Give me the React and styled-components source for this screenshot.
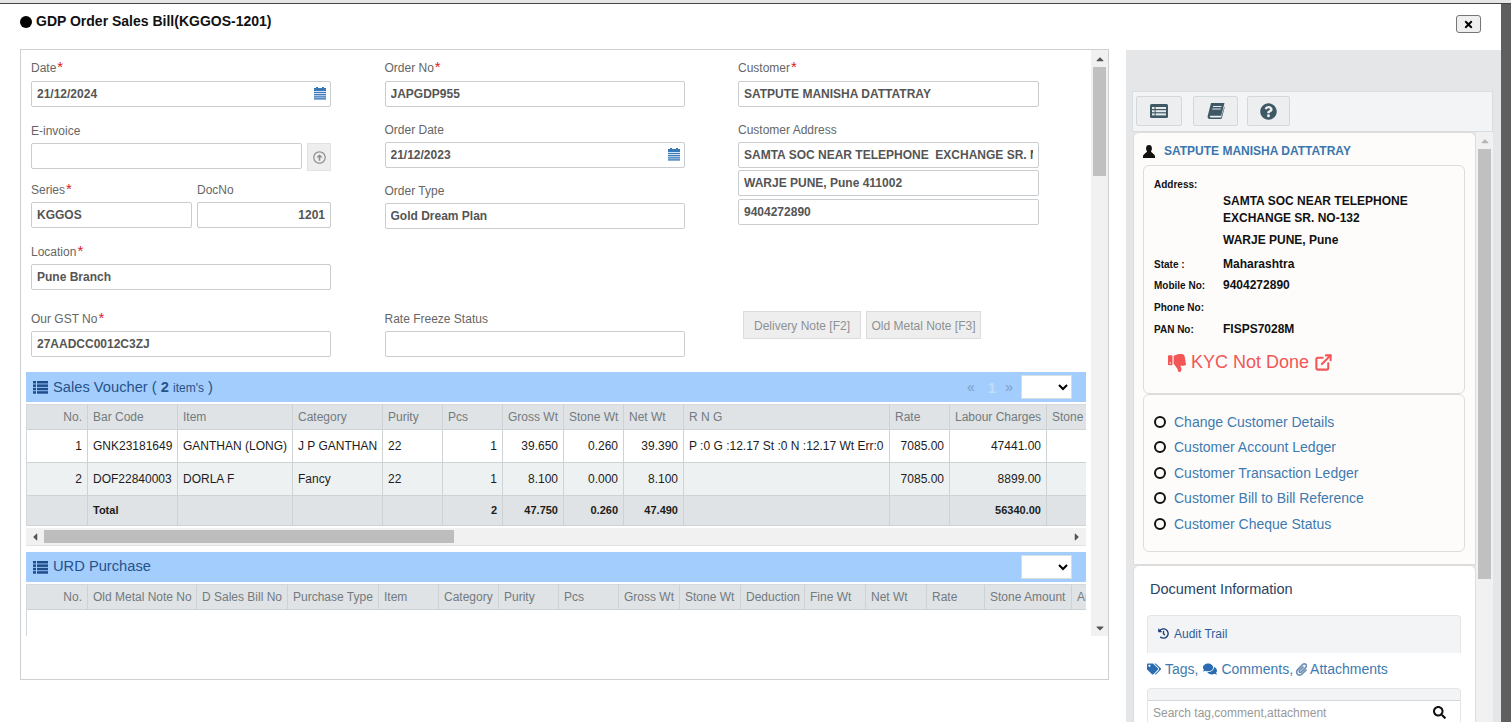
import React from 'react';
import styled, { createGlobalStyle } from 'styled-components';
import {
  FaRegArrowAltCircleUp, FaTimes, FaQuestionCircle, FaThumbsDown, FaTags, FaComments, FaPaperclip,
  FaHistory, FaSearch, FaCaretUp, FaCaretDown, FaCaretLeft, FaCaretRight,
} from 'react-icons/fa';
import { FiExternalLink } from 'react-icons/fi';

const GlobalStyle = createGlobalStyle`
  html, body { margin: 0; padding: 0; height: 100%; overflow: hidden; }
  body { font-family: "Liberation Sans", Arial, sans-serif; font-size: 12px; background: #5f5f5f; }
  * { box-sizing: border-box; }
`;

const Page = styled.div`
  height: 722px;
  display: flex;
  flex-direction: column;
  overflow: hidden;
`;
const TopStrip = styled.div`
  height: 4px;
  flex: none;
  background: #e6e6e6;
  border-bottom: 1px solid #444;
`;
const Modal = styled.div`
  width: 1501px;
  flex: 1;
  min-height: 0;
  background: #fff;
  display: flex;
  flex-direction: column;
`;
const ModalHeader = styled.div`
  height: 45px;
  flex: none;
  display: flex;
  justify-content: space-between;
  padding: 11px 20px 0 20px;
`;
const ModalTitle = styled.div`
  display: flex;
  align-items: flex-start;
  gap: 4px;
  font-size: 14px;
  font-weight: bold;
  line-height: 13px;
  color: #111;
`;
const Bullet = styled.span`
  width: 12px;
  height: 12px;
  border-radius: 50%;
  background: #000;
  margin-top: 1px;
`;
const CloseButton = styled.button`
  width: 25px;
  height: 18px;
  padding: 0;
  display: flex;
  align-items: center;
  justify-content: center;
  background: #efefef;
  border: 1px solid #767676;
  border-radius: 3px;
  font-size: 11px;
  color: #000;
`;
const ModalBody = styled.div`
  flex: 1;
  min-height: 0;
  display: flex;
  padding-left: 20px;
  gap: 17px;
`;

const LeftPanel = styled.div`
  width: 1089px;
  height: 631px;
  flex: none;
  border: 1px solid #ccd0d2;
`;
const LeftInner = styled.div`
  height: 586px;
  display: flex;
`;
const LeftScroll = styled.div`
  width: 1070px;
  flex: none;
  overflow: hidden;
`;
const VBar = styled.div`
  width: ${(p) => p.$w}px;
  flex: none;
  display: flex;
  flex-direction: column;
  align-items: center;
  background: #f1f1f1;
  color: ${(p) => p.$arrow || '#555'};
  font-size: 12px;
`;
const VArrow = styled.div`
  height: 17px;
  flex: none;
  display: flex;
  align-items: center;
  justify-content: center;
`;
const VThumb = styled.div`
  width: 13px;
  height: ${(p) => p.$h}px;
  flex: none;
  background: #c0c0c0;
`;
const VSpace = styled.div`
  flex: 1;
`;

const Form = styled.div`
  display: grid;
  grid-template-columns: 300px 300px 301px;
  column-gap: 53.5px;
  padding: 9px 0 0 10px;
`;
const Column = styled.div`
  display: flex;
  flex-direction: column;
`;
const Field = styled.div`
  margin-top: ${(p) => p.$mt || 0}px;
  width: ${(p) => (p.$w ? `${p.$w}px` : 'auto')};
`;
const Label = styled.div`
  height: 17px;
  line-height: 21px;
  margin-bottom: 5px;
  color: #666;
  font-size: 12px;
`;
const FirstLabel = styled(Label)`
  line-height: 19px;
`;
const Star = styled.span`
  color: #d9202a;
  font-size: 15px;
  line-height: 12px;
  margin-left: 1px;
`;
const InputWrap = styled.div`
  position: relative;
`;
const TextInput = styled.input`
  display: block;
  width: 100%;
  height: 26px;
  padding: 0 5px;
  margin-top: ${(p) => p.$mt || 0}px;
  border: 1px solid #c9cdd0;
  border-radius: 2px;
  background: #fff;
  color: #555;
  font-family: "Liberation Sans", Arial, sans-serif;
  font-size: 12px;
  font-weight: bold;
  text-align: ${(p) => (p.$right ? 'right' : 'left')};
  outline: none;
`;
const CalIcon = styled.span`
  position: absolute;
  right: 5px;
  top: 6px;
  display: flex;
`;
const Row = styled.div`
  display: flex;
  align-items: flex-start;
  gap: ${(p) => p.$gap || 0}px;
`;
const UploadButton = styled.div`
  width: 24px;
  height: 28px;
  flex: none;
  display: flex;
  align-items: center;
  justify-content: center;
  background: #eee;
  border: 1px solid #e2e2e2;
  color: #8a8f92;
  font-size: 13px;
`;
const NoteRow = styled.div`
  display: flex;
  gap: 5px;
  margin: 86px 0 0 5px;
`;
const NoteButton = styled.div`
  width: ${(p) => p.$w}px;
  height: 28px;
  padding-top: 1px;
  display: flex;
  align-items: center;
  justify-content: center;
  background: #eeeeee;
  border: 1px solid #dcdcdc;
  color: #8d9194;
  font-size: 12px;
`;

const Section = styled.div`
  margin: ${(p) => p.$mt}px 5px 0 5px;
`;
const SectionHead = styled.div`
  height: 30px;
  display: flex;
  align-items: center;
  padding: 0 14px 0 7px;
  background: #a3cdfd;
`;
const HeadIcon = styled.span`
  display: flex;
  margin-right: 5px;
`;
const HeadTitle = styled.span`
  color: #27528a;
  font-size: 14.7px;
  white-space: pre;
  position: relative;
  top: ${(p) => p.$top || 0}px;
`;
const HeadSmall = styled.span`
  font-size: 12px;
`;
const Pager = styled.div`
  margin-left: auto;
  display: flex;
  align-items: center;
  gap: 9px;
  margin-right: 8px;
  color: #7b9cc4;
  font-size: 14px;
`;
const PagerNumber = styled.b`
  color: #c3dcf7;
  font-size: 15px;
  margin-left: 4px;
`;
const PageSelect = styled.select`
  width: 51px;
  height: 24px;
  margin-left: ${(p) => (p.$auto ? 'auto' : '0')};
  background: #fff;
  border: 1px solid #d6dde3;
`;
const TableClip = styled.div`
  margin-top: 2px;
  overflow: hidden;
  border-left: 1px solid #d3d7d9;
  height: ${(p) => (p.$h ? `${p.$h}px` : 'auto')};
`;
const Table = styled.table`
  table-layout: fixed;
  width: ${(p) => p.$w}px;
  border-collapse: separate;
  border-spacing: 0;
`;
const Col = styled.col`
  width: ${(p) => p.$w}px;
`;
const Th = styled.th`
  height: 26px;
  padding: 0 5px;
  background: #dfe3e5;
  border-right: 1px solid #cdd2d5;
  border-bottom: 1px solid #cdd2d5;
  border-top: 1px solid #d5d9db;
  color: #737a80;
  font-size: 12px;
  font-weight: normal;
  text-align: ${(p) => (p.$right ? 'right' : 'left')};
  white-space: nowrap;
  overflow: hidden;
`;
const Td = styled.td`
  height: 33px;
  padding: 0 5px;
  background: ${(p) => (p.$alt ? '#eef1f2' : '#fff')};
  border-right: 1px solid #cdd2d5;
  border-bottom: 1px solid #cdd2d5;
  color: #1c1c1c;
  font-size: 12px;
  text-align: ${(p) => (p.$right ? 'right' : 'left')};
  white-space: nowrap;
  overflow: hidden;
`;
const TotalTd = styled(Td)`
  height: 30px;
  padding-bottom: 2px;
  background: #dfe3e5;
  font-size: 11px;
  font-weight: bold;
`;
const HBar = styled.div`
  height: 18px;
  margin-top: 2px;
  display: flex;
  align-items: center;
  background: #f1f1f1;
  border-bottom: 1px solid #e2e2e2;
  color: #555;
  font-size: 12px;
`;
const HArrow = styled.div`
  width: 18px;
  flex: none;
  display: flex;
  justify-content: center;
`;
const HThumb = styled.div`
  width: 410px;
  height: 13px;
  background: #bdbdbd;
`;
const HSpace = styled.div`
  flex: 1;
`;

const RightPane = styled.div`
  width: 375px;
  flex: none;
  margin-top: 1px;
  padding: 41px 8px 0 6px;
  background: #e4e6e8;
  display: flex;
  flex-direction: column;
  min-height: 0;
`;
const Toolbar = styled.div`
  height: 41px;
  flex: none;
  display: flex;
  padding: 4px 3px;
  background: #f3f4f5;
  border: 1px solid #dadddf;
`;
const ToolButton = styled.div`
  width: ${(p) => p.$w}px;
  height: 30px;
  margin-right: ${(p) => p.$mr}px;
  display: flex;
  align-items: center;
  justify-content: center;
  background: #eceeef;
  border: 1px solid #d5d8da;
  border-radius: 2px;
  color: #3f5866;
  font-size: 17px;
`;
const RightScroll = styled.div`
  flex: 1;
  min-height: 0;
  display: flex;
  padding-left: 1px;
`;
const RightCards = styled.div`
  width: 343px;
  flex: none;
  overflow: hidden;
`;
const CustomerCard = styled.div`
  height: 433px;
  padding: 0 10px 0 9px;
  background: #fdfcfb;
  border: 1px solid #dcdcdc;
  border-radius: 6px 6px 0 0;
`;
const CustomerName = styled.div`
  height: 32px;
  padding-top: 4px;
  display: flex;
  align-items: center;
  gap: 9px;
  color: #3a76ad;
  font-size: 12px;
  font-weight: bold;
`;
const InnerBox = styled.div`
  height: ${(p) => p.$h}px;
  padding: ${(p) => p.$pad};
  border: 1px solid #dcdcdc;
  border-radius: 6px;
`;
const InfoRow = styled.div`
  display: flex;
  align-items: center;
  height: ${(p) => p.$h}px;
  line-height: 17px;
`;
const InfoKey = styled.div`
  width: 69px;
  flex: none;
  font-size: 10px;
  font-weight: bold;
  color: #111;
`;
const InfoValue = styled.div`
  font-size: 12px;
  font-weight: bold;
  color: #111;
`;
const KycRow = styled.div`
  display: flex;
  align-items: center;
  gap: 5px;
  margin: 12px 0 0 14px;
  color: #f25656;
  font-size: 18px;
`;
const LinkRow = styled.div`
  height: 25.5px;
  display: flex;
  align-items: center;
  gap: 8px;
  color: #3d7ab0;
  font-size: 14px;
`;
const Ring = styled.span`
  width: 12px;
  height: 12px;
  flex: none;
  border: 2px solid #111;
  border-radius: 50%;
`;
const DocCard = styled.div`
  padding: 0 14px 0 13px;
  background: #fff;
  border: 1px solid #dcdcdc;
  border-radius: 6px 6px 0 0;
  height: 200px;
`;
const DocTitle = styled.div`
  height: 49px;
  padding: 0 0 0 3px;
  line-height: 46px;
  font-size: 14.5px;
  color: #2a4365;
`;
const AuditBox = styled.div`
  height: 38px;
  padding: 0 0 2px 10px;
  display: flex;
  align-items: center;
  gap: 5px;
  background: #f3f4f5;
  border: 1px solid #e4e5e6;
  border-bottom: none;
  border-radius: 4px 4px 0 0;
  color: #2f5c9c;
  font-size: 12px;
`;
const TagsLine = styled.div`
  height: 32px;
  display: flex;
  align-items: center;
  gap: 4px;
  color: #3d7ab0;
  font-size: 14px;
`;
const TagIcon = styled.span`
  color: ${(p) => p.$c || '#2b6cb0'};
  display: flex;
  font-size: ${(p) => p.$s || 14}px;
  margin: 0 ${(p) => p.$mr || 0}px 0 ${(p) => p.$ml || 0}px;
`;
const SearchBox = styled.div`
  margin-top: 3px;
  padding-top: 11px;
  background: #f3f4f5;
  border: 1px solid #e4e5e6;
  border-radius: 4px 4px 0 0;
`;
const SearchField = styled.div`
  height: 24px;
  display: flex;
  align-items: center;
  justify-content: space-between;
  padding: 0 14px 0 5px;
  background: #fff;
  border-top: 1px solid #d5d8da;
  color: #999;
  font-size: 12px;
`;
const SearchIcon = styled.span`
  color: #111;
  display: flex;
  font-size: 13px;
`;

const ListGlyph = () => (
  <svg width="15" height="13" viewBox="0 0 15 13" fill="#1f4d8c">
    {[0, 3.4, 6.8, 10.2].map((y) => (
      <g key={y}>
        <rect x="0" y={y} width="3" height="2.5" />
        <rect x="4" y={y} width="11" height="2.5" />
      </g>
    ))}
  </svg>
);

const ListAltGlyph = () => (
  <svg width="18" height="14" viewBox="0 0 18 14">
    <rect width="18" height="14" rx="1.5" fill="#3f5866" />
    {[3, 6.2, 9.4].map((y) => (
      <g key={y} fill="#e6eaec">
        <rect x="2" y={y} width="2.6" height="2" />
        <rect x="5.6" y={y} width="10.4" height="2" />
      </g>
    ))}
  </svg>
);

const BookGlyph = () => (
  <svg width="18" height="16" viewBox="0 0 18 16">
    <path
      fill="#3f5866"
      d="M4 0H17.5L14.2 12.8H3.6C2.5 12.8 2.4 14.4 3.6 14.4H14.2L17.5 3V5L14.9 15Q14.6 16 13.6 16H3C1 16 .2 14.5 .8 12.5Z"
    />
    <path stroke="#e6eaec" strokeWidth="1" d="M6 3.5H14.5M5.3 6H13.8" />
  </svg>
);

const UserGlyph = () => (
  <svg width="12" height="13" viewBox="0 0 12 13" fill="#111">
    <ellipse cx="6" cy="3.4" rx="2.9" ry="3.4" />
    <path d="M4 6C4 8 .6 8.6 0 11V13H12V11C11.4 8.6 8 8 8 6Z" />
  </svg>
);

const CalendarGlyph = () => (
  <svg width="12" height="13" viewBox="0 0 12 13" fill="#3a79b8">
    <rect x="2" y="0" width="2" height="2" />
    <rect x="8" y="0" width="2" height="2" />
    <rect x="0" y="1" width="12" height="3" />
    {[4.8, 7, 9.2, 11.2].map((y) => (
      <rect key={y} x="0" y={y} width="12" height="1.4" />
    ))}
  </svg>
);

const salesCols = [61, 90, 115, 90, 60, 60, 61, 60, 60, 206, 60, 97, 60];
const salesHead = [['No.', 1], ['Bar Code'], ['Item'], ['Category'], ['Purity'], ['Pcs'], ['Gross Wt'], ['Stone Wt'], ['Net Wt'], ['R N G'], ['Rate'], ['Labour Charges'], ['Stone Amount']];
const rows = [
  ['1', 'GNK23181649', 'GANTHAN (LONG)', 'J P GANTHAN', '22', '1', '39.650', '0.260', '39.390', 'P :0 G :12.17 St :0 N :12.17 Wt Err:0', '7085.00', '47441.00', ''],
  ['2', 'DOF22840003', 'DORLA F', 'Fancy', '22', '1', '8.100', '0.000', '8.100', '', '7085.00', '8899.00', ''],
];
const totals = ['', 'Total', '', '', '', '2', '47.750', '0.260', '47.490', '', '', '56340.00', ''];
const rightCols = [0, 5, 6, 7, 8, 10, 11, 12];

const urdCols = [61, 109, 91, 91, 60, 60, 60, 60, 61, 61, 64, 61, 61, 58, 87, 60];
const urdHead = ['No.', 'Old Metal Note No', 'D Sales Bill No', 'Purchase Type', 'Item', 'Category', 'Purity', 'Pcs', 'Gross Wt', 'Stone Wt', 'Deduction', 'Fine Wt', 'Net Wt', 'Rate', 'Stone Amount', 'Amount'];

const links = ['Change Customer Details', 'Customer Account Ledger', 'Customer Transaction Ledger', 'Customer Bill to Bill Reference', 'Customer Cheque Status'];

const sum = (list) => list.reduce((a, b) => a + b, 0);

export default function App() {
  return (
    <Page>
      <GlobalStyle />
      <TopStrip />
      <Modal>
        <ModalHeader>
          <ModalTitle><Bullet />GDP Order Sales Bill(KGGOS-1201)</ModalTitle>
          <CloseButton><FaTimes /></CloseButton>
        </ModalHeader>
        <ModalBody>
          <LeftPanel>
            <LeftInner>
              <LeftScroll>
                <Form>
                  <Column>
                    <Field>
                      <FirstLabel>Date<Star>*</Star></FirstLabel>
                      <InputWrap>
                        <TextInput readOnly value="21/12/2024" />
                        <CalIcon><CalendarGlyph /></CalIcon>
                      </InputWrap>
                    </Field>
                    <Field $mt={14}>
                      <Label>E-invoice</Label>
                      <Row $gap={5}>
                        <TextInput readOnly value="" />
                        <UploadButton><FaRegArrowAltCircleUp /></UploadButton>
                      </Row>
                    </Field>
                    <Row $gap={5}>
                      <Field $mt={9} $w={161}>
                        <Label>Series<Star>*</Star></Label>
                        <TextInput readOnly value="KGGOS" />
                      </Field>
                      <Field $mt={9} $w={134}>
                        <Label>DocNo</Label>
                        <TextInput readOnly $right value="1201" />
                      </Field>
                    </Row>
                    <Field $mt={14}>
                      <Label>Location<Star>*</Star></Label>
                      <TextInput readOnly value="Pune Branch" />
                    </Field>
                    <Field $mt={19}>
                      <Label>Our GST No<Star>*</Star></Label>
                      <TextInput readOnly value="27AADCC0012C3ZJ" />
                    </Field>
                  </Column>
                  <Column>
                    <Field>
                      <FirstLabel>Order No<Star>*</Star></FirstLabel>
                      <TextInput readOnly value="JAPGDP955" />
                    </Field>
                    <Field $mt={13}>
                      <Label>Order Date</Label>
                      <InputWrap>
                        <TextInput readOnly value="21/12/2023" />
                        <CalIcon><CalendarGlyph /></CalIcon>
                      </InputWrap>
                    </Field>
                    <Field $mt={13}>
                      <Label>Order Type</Label>
                      <TextInput readOnly value="Gold Dream Plan" />
                    </Field>
                    <Field $mt={80}>
                      <Label>Rate Freeze Status</Label>
                      <TextInput readOnly value="" />
                    </Field>
                  </Column>
                  <Column>
                    <Field>
                      <FirstLabel>Customer<Star>*</Star></FirstLabel>
                      <TextInput readOnly value="SATPUTE MANISHA DATTATRAY" />
                    </Field>
                    <Field $mt={13}>
                      <Label>Customer Address</Label>
                      <TextInput readOnly value="SAMTA SOC NEAR TELEPHONE  EXCHANGE SR. NO-132" />
                      <TextInput readOnly $mt={2} value="WARJE PUNE, Pune 411002" />
                      <TextInput readOnly $mt={3} value="9404272890" />
                    </Field>
                    <NoteRow>
                      <NoteButton $w={118}>Delivery Note [F2]</NoteButton>
                      <NoteButton $w={115}>Old Metal Note [F3]</NoteButton>
                    </NoteRow>
                  </Column>
                </Form>

                <Section $mt={15}>
                  <SectionHead>
                    <HeadIcon><ListGlyph /></HeadIcon>
                    <HeadTitle>Sales Voucher ( <b>2</b> <HeadSmall>item's</HeadSmall> )</HeadTitle>
                    <Pager>
                      <span>«</span>
                      <PagerNumber>1</PagerNumber>
                      <span>»</span>
                    </Pager>
                    <PageSelect />
                  </SectionHead>
                  <TableClip>
                    <Table $w={sum(salesCols)}>
                      <colgroup>
                        {salesCols.map((w, i) => <Col key={i} $w={w} />)}
                      </colgroup>
                      <thead>
                        <tr>
                          {salesHead.map(([t, r]) => <Th key={t} $right={r}>{t}</Th>)}
                        </tr>
                      </thead>
                      <tbody>
                        {rows.map((row, n) => (
                          <tr key={n}>
                            {row.map((c, i) => (
                              <Td key={i} $alt={n === 1} $right={rightCols.includes(i)}>{c}</Td>
                            ))}
                          </tr>
                        ))}
                        <tr>
                          {totals.map((c, i) => (
                            <TotalTd key={i} $right={rightCols.includes(i)}>{c}</TotalTd>
                          ))}
                        </tr>
                      </tbody>
                    </Table>
                  </TableClip>
                  <HBar>
                    <HArrow><FaCaretLeft /></HArrow>
                    <HThumb />
                    <HSpace />
                    <HArrow><FaCaretRight /></HArrow>
                  </HBar>
                </Section>

                <Section $mt={6}>
                  <SectionHead>
                    <HeadIcon><ListGlyph /></HeadIcon>
                    <HeadTitle $top={-1}>URD Purchase</HeadTitle>
                    <PageSelect $auto />
                  </SectionHead>
                  <TableClip $h={52}>
                    <Table $w={sum(urdCols)}>
                      <colgroup>
                        {urdCols.map((w, i) => <Col key={i} $w={w} />)}
                      </colgroup>
                      <thead>
                        <tr>
                          {urdHead.map((t, i) => <Th key={t} $right={i === 0}>{t}</Th>)}
                        </tr>
                      </thead>
                    </Table>
                  </TableClip>
                </Section>
              </LeftScroll>
              <VBar $w={17}>
                <VArrow><FaCaretUp /></VArrow>
                <VThumb $h={109} />
                <VSpace />
                <VArrow><FaCaretDown /></VArrow>
              </VBar>
            </LeftInner>
          </LeftPanel>

          <RightPane>
            <Toolbar>
              <ToolButton $w={46} $mr={11}><ListAltGlyph /></ToolButton>
              <ToolButton $w={45} $mr={9}><BookGlyph /></ToolButton>
              <ToolButton $w={43} $mr={0}><FaQuestionCircle /></ToolButton>
            </Toolbar>
            <RightScroll>
              <RightCards>
                <CustomerCard>
                  <CustomerName>
                    <UserGlyph />
                    SATPUTE MANISHA DATTATRAY
                  </CustomerName>
                  <InnerBox $h={229} $pad="10px 10px">
                    <InfoRow $h={17}><InfoKey>Address:</InfoKey></InfoRow>
                    <InfoRow $h={17}><InfoKey /><InfoValue>SAMTA SOC NEAR TELEPHONE</InfoValue></InfoRow>
                    <InfoRow $h={17}><InfoKey /><InfoValue>EXCHANGE SR. NO-132</InfoValue></InfoRow>
                    <InfoRow $h={27}><InfoKey /><InfoValue>WARJE PUNE, Pune</InfoValue></InfoRow>
                    <InfoRow $h={20}><InfoKey>State :</InfoKey><InfoValue>Maharashtra</InfoValue></InfoRow>
                    <InfoRow $h={22}><InfoKey>Mobile No:</InfoKey><InfoValue>9404272890</InfoValue></InfoRow>
                    <InfoRow $h={22}><InfoKey>Phone No:</InfoKey></InfoRow>
                    <InfoRow $h={22}><InfoKey>PAN No:</InfoKey><InfoValue>FISPS7028M</InfoValue></InfoRow>
                    <KycRow><FaThumbsDown />KYC Not Done<FiExternalLink size={19} strokeWidth={2.6} /></KycRow>
                  </InnerBox>
                  <InnerBox $h={158} $pad="14px 10px 0 10px">
                    {links.map((l) => (
                      <LinkRow key={l}>
                        <Ring />
                        {l}
                      </LinkRow>
                    ))}
                  </InnerBox>
                </CustomerCard>
                <DocCard>
                  <DocTitle>Document Information</DocTitle>
                  <AuditBox>
                    <TagIcon $c="#1f3f7a" $s={11}><FaHistory /></TagIcon>
                    Audit Trail
                  </AuditBox>
                  <TagsLine>
                    <TagIcon><FaTags /></TagIcon>Tags,
                    <TagIcon $ml={1}><FaComments /></TagIcon>Comments,
                    <TagIcon $c="#6c8fb3" $ml={-2} $mr={-2} $s={13}><FaPaperclip /></TagIcon>Attachments
                  </TagsLine>
                  <SearchBox>
                    <SearchField>
                      Search tag,comment,attachment
                      <SearchIcon><FaSearch /></SearchIcon>
                    </SearchField>
                  </SearchBox>
                </DocCard>
              </RightCards>
              <VBar $w={17} $arrow="#b5b5b5">
                <VArrow><FaCaretUp /></VArrow>
                <VThumb $h={430} />
                <VSpace />
              </VBar>
            </RightScroll>
          </RightPane>
        </ModalBody>
      </Modal>
    </Page>
  );
}
